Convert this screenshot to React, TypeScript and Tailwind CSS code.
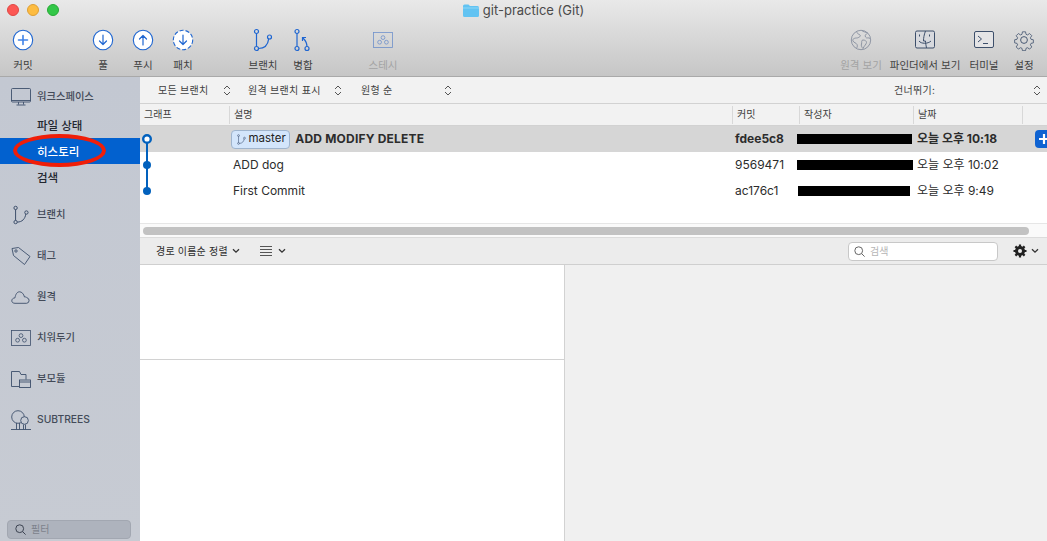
const font = { fontFamily: '"Inter", "Noto Sans CJK KR", sans-serif' }

const blue = "#1f66d1"
const slate = "#3d4f6b"

function ToolIcon({ children }: { children: React.ReactNode }) {
  return (
    <svg width="24" height="24" viewBox="0 0 24 24" fill="none" strokeLinecap="round" strokeLinejoin="round">
      {children}
    </svg>
  )
}

function CircleIcon({ dashed, children }: { dashed?: boolean; children: React.ReactNode }) {
  return (
    <ToolIcon>
      <circle cx="12" cy="12" r="9.7" fill="#fff" stroke={blue} strokeWidth="1.1" strokeDasharray={dashed ? "4 2" : undefined} strokeLinecap="butt" />
      {children}
    </ToolIcon>
  )
}

function BranchIcon({ color = blue, size = 24 }: { color?: string; size?: number }) {
  return (
    <svg width={size} height={size} viewBox="0 0 24 24" fill="none" stroke={color} strokeWidth="1.2">
      <circle cx="5.5" cy="3.5" r="2" />
      <circle cx="5.5" cy="20.5" r="2" />
      <circle cx="18.5" cy="9" r="2" />
      <path d="M5.5 5.5v13M7.5 20.5c6 0 9.5-4 10.2-9.6" />
    </svg>
  )
}

function StashIcon({ color, w, h }: { color: string; w: number; h: number }) {
  return (
    <svg width={w} height={h} viewBox="0 0 20 16" fill="none" stroke={color} strokeWidth="0.8">
      <rect x="0.5" y="0.5" width="19" height="15" />
      <circle cx="10" cy="5.6" r="1.9" />
      <circle cx="6.6" cy="10.2" r="1.9" />
      <circle cx="13.4" cy="10.2" r="1.9" />
    </svg>
  )
}

function ToolItem({ label, icon, width = "w-10", dim }: { label: string; icon: React.ReactNode; width?: string; dim?: boolean }) {
  return (
    <div className={`${width} flex flex-col items-center shrink-0`}>
      <div className={`h-6 flex items-center justify-center ${dim ? "opacity-60" : ""}`}>{icon}</div>
      <span className={`mt-[7px] text-[10.5px] leading-[14px] whitespace-nowrap ${dim ? "text-[#a3a3a3]" : "text-[#3f3f3f]"}`}>{label}</span>
    </div>
  )
}

function Updown({ className = "" }: { className?: string }) {
  return (
    <svg className={className} width="8" height="11" viewBox="0 0 8 11" fill="none" stroke="#555" strokeWidth="1">
      <path d="M1 4l3-3 3 3M1 7l3 3 3-3" />
    </svg>
  )
}

function Chevron() {
  return (
    <svg width="8" height="6" viewBox="0 0 8 6" fill="none" stroke="#333" strokeWidth="1.3">
      <path d="M1 1.2l3 3 3-3" />
    </svg>
  )
}

function SearchGlass({ color = "#666" }: { color?: string }) {
  return (
    <svg width="11" height="11" viewBox="0 0 11 11" fill="none" stroke={color} strokeWidth="1">
      <circle cx="4.7" cy="4.7" r="3.9" />
      <path d="M7.6 7.6l3 3" />
    </svg>
  )
}

function SideSection({ label, icon, className = "" }: { label: string; icon: React.ReactNode; className?: string }) {
  return (
    <div className={`flex items-center h-5 pl-[11px] ${className}`}>
      <div className="w-[26px] h-5 flex items-center justify-start shrink-0">{icon}</div>
      <span className="text-[10.3px] text-[#434a58] font-medium whitespace-nowrap">{label}</span>
    </div>
  )
}

const commits = [
  { hash: "fdee5c8", msg: "ADD MODIFY DELETE", date: "오늘 오후 10:18", bar: "ml-[-2px] w-[115px]", head: true },
  { hash: "9569471", msg: "ADD dog", date: "오늘 오후 10:02", bar: "ml-[-2px] w-[116px]" },
  { hash: "ac176c1", msg: "First Commit", date: "오늘 오후 9:49", bar: "ml-[-1px] w-[112px]" },
]

export default function App() {
  return (
    <div className="w-[1047px] h-[541px] overflow-hidden relative bg-white flex flex-col" style={font}>
      {/* title + toolbar */}
      <div className="h-[77px] shrink-0 bg-gradient-to-b from-[#e9e9e9] to-[#c6c6c6] border-b border-[#a9a9a9] flex flex-col">
        <div className="h-[21px] relative flex items-center justify-center">
          <div className="absolute left-[7px] top-[4px] flex gap-[8px]">
            <span className="w-3 h-3 rounded-full bg-[#fc5753] border border-[#df4744]" />
            <span className="w-3 h-3 rounded-full bg-[#fdbc40] border border-[#de9f34]" />
            <span className="w-3 h-3 rounded-full bg-[#33c748] border border-[#27aa35]" />
          </div>
          <div className="flex items-center gap-1">
            <svg width="16" height="13" viewBox="0 0 16 13">
              <path d="M0 2a1.5 1.5 0 0 1 1.5-1.5h4L7 2h7.5A1.5 1.5 0 0 1 16 3.500V11.500a1.500 1.500 0 0 1-1.500 1.500h-13A1.500 1.500 0 0 1 0 11.500z" fill="#62c3f2" />
              <path d="M0 4h16" stroke="#9adcf9" strokeWidth="0.8" />
            </svg>
            <span className="text-[13px] text-[#4a4a4a]">git-practice (Git)</span>
          </div>
        </div>
        <div className="flex pl-[3px] pt-[7px]">
          <ToolItem label="커밋" icon={<CircleIcon><path d="M12 7.500v9M7.500 12h9" stroke="#3f83e8" strokeWidth="1.6" /></CircleIcon>} />
          <div className="w-10 shrink-0" />
          <ToolItem label="풀" icon={<CircleIcon><path d="M12 7v9.500M8.500 13l3.500 3.500 3.500-3.500" stroke={blue} strokeWidth="1.2" /></CircleIcon>} />
          <ToolItem label="푸시" icon={<CircleIcon><path d="M12 17V7.500M8.500 11L12 7.500 15.500 11" stroke={blue} strokeWidth="1.2" /></CircleIcon>} />
          <ToolItem label="패치" icon={<CircleIcon dashed><path d="M12 7v9.500M8.500 13l3.500 3.500 3.500-3.500" stroke={blue} strokeWidth="1.2" /></CircleIcon>} />
          <div className="w-10 shrink-0" />
          <ToolItem label="브랜치" icon={<BranchIcon />} />
          <ToolItem
            label="병합"
            icon={
              <svg width="24" height="24" viewBox="0 0 24 24" fill="none" stroke={blue} strokeWidth="1.2">
                <circle cx="6" cy="3.500" r="2" />
                <circle cx="6" cy="20.500" r="2" />
                <circle cx="16" cy="20.500" r="2" />
                <path d="M6 5.500v13M16 18.500c0-3-1.500-6-4-8.500M11.500 13V9.500H15" />
              </svg>
            }
          />
          <div className="w-10 shrink-0" />
          <ToolItem label="스테시" dim icon={<StashIcon color="#2b63c4" w={20} h={16} />} />
          <div className="flex-1" />
          <ToolItem
            label="원격 보기"
            width="w-[48px]"
            dim
            icon={
              <svg width="22" height="22" viewBox="0 0 22 22" fill="none" stroke="#54617a" strokeWidth="0.9">
                <circle cx="11" cy="11" r="9.700" />
                <path d="M7 2.500c-.5 2 1.500 2.500 3 3.500s-1.500 3-3.500 3-4.500 1-3.500 3 3 1.500 4 3.500-.5 3 0 3.500M12 1.500c1 1.500 4 1.500 5.500 2.500-1.500 1.500-3 2-2 4s3.500 0 4.500 1.500M13 11c2 0 3.500 1 3.500 2.500S14 17 13 19.500c-1.500-1.500-2-3-1.500-4.500S11 11 13 11z" />
              </svg>
            }
          />
          <ToolItem
            label="파인더에서 보기"
            width="w-[70px] ml-[5px]"
            icon={
              <svg width="20" height="20" viewBox="0 0 20 20" fill="none" stroke={slate} strokeWidth="1">
                <rect x="0.500" y="1" width="19" height="17" rx="1.500" fill="#d7d9de" />
                <path d="M10.500 1C9 5 8.500 8 8.500 11H10.500c0 2 .5 4 1 7M4.500 4.500v2M14.500 4.500v2M4 11c2 3 9 3 12 0" />
              </svg>
            }
          />
          <ToolItem
            label="터미널"
            width="w-[40px] ml-[4px]"
            icon={
              <svg width="20" height="18" viewBox="0 0 20 18" fill="none" stroke={slate} strokeWidth="1">
                <rect x="0.500" y="0.500" width="19" height="16" rx="1.500" fill="#e4e4e6" />
                <path d="M4 5l3.500 3L4 11M9 12.500h5" />
              </svg>
            }
          />
          <ToolItem
            label="설정"
            width="w-[40px] mr-[3px]"
            icon={
              <svg width="22" height="22" viewBox="0 0 24 24" fill="none" stroke={slate} strokeWidth="1" strokeLinejoin="round">
                <circle cx="12" cy="12" r="3.700" />
                <path d="M10 1.500h4l.6 3.200 1.900.8 2.700-1.800 2.800 2.800-1.800 2.700.8 1.900 3 .6v4l-3 .6-.8 1.900 1.800 2.700-2.800 2.800-2.700-1.800-1.900.8-.6 3h-4l-.6-3-1.900-.8-2.700 1.800-2.800-2.800 1.800-2.700-.8-1.900-3-.6v-4l3-.6.8-1.900-1.800-2.700 2.800-2.800 2.700 1.800 1.900-.8z" transform="translate(1.800 1.800) scale(.85)" />
              </svg>
            }
          />
        </div>
      </div>

      <div className="flex-1 flex min-h-0">
        {/* sidebar */}
        <aside className="w-[140px] shrink-0 bg-gradient-to-b from-[#c3c8d2] to-[#c7cbd3] flex flex-col pt-[10px] pb-[2px] relative">
          <SideSection
            label="워크스페이스"
            icon={
              <svg width="20" height="18" viewBox="0 0 20 18" fill="none" stroke={slate} strokeWidth="0.9">
                <rect x="0.500" y="0.500" width="19" height="13.500" rx="1" />
                <path d="M0.500 12.500h19M7.500 14v2.500M12.500 14v2.500M5.500 17h9" />
              </svg>
            }
          />
          <div className="mt-[5px] flex flex-col text-[11.5px] font-medium text-[#23272f]">
            <div className="h-[26px] flex items-center pl-[37px] pt-[3px]">파일 상태</div>
            <div className="h-[26px] flex items-center pl-[37px] pt-[3px] bg-[#0261cf] text-white">히스토리</div>
            <div className="h-[26px] flex items-center pl-[37px] pt-[3px]">검색</div>
          </div>
          <SideSection className="mt-[15px]" label="브랜치" icon={<BranchIcon color={slate} size={20} />} />
          <SideSection
            className="mt-[21px]"
            label="태그"
            icon={
              <svg width="20" height="20" viewBox="0 0 20 20" fill="none" stroke={slate} strokeWidth="0.9" strokeLinejoin="round">
                <path d="M1 2.500L7.500 1.500 19 10.500 13.500 18.500 2.500 9.500z" />
                <circle cx="5" cy="5" r="1.200" />
              </svg>
            }
          />
          <SideSection
            className="mt-[21px]"
            label="원격"
            icon={
              <svg width="19" height="13" viewBox="0 0 19 13" fill="none" stroke={slate} strokeWidth="0.9">
                <path d="M4 12.300H15.500a2.800 2.800 0 0 0 .5-5.500C15.500 6 14.500 5.800 13.500 6 12.800 3 10.800.8 8.500.8 6 .8 4.500 3.500 4 6.800 2 7 .8 8.200.8 9.800c0 1.500 1.200 2.500 3.200 2.500z" />
              </svg>
            }
          />
          <SideSection className="mt-[21px]" label="치워두기" icon={<StashIcon color={slate} w={20} h={16} />} />
          <SideSection
            className="mt-[21px]"
            label="부모듈"
            icon={
              <svg width="20" height="17" viewBox="0 0 20 17" fill="none" stroke={slate} strokeWidth="0.9">
                <path d="M8 15.500H.500V.500h8l1.500 3h5v5" />
                <rect x="8.500" y="9" width="11" height="7.500" />
                <path d="M8.500 11h11" />
              </svg>
            }
          />
          <SideSection
            className="mt-[21px]"
            label="SUBTREES"
            icon={
              <svg width="20" height="20" viewBox="0 0 20 20" fill="none" stroke={slate} strokeWidth="0.9">
                <circle cx="7" cy="7" r="6.300" fill="#c5cad3" />
                <circle cx="13.500" cy="10.500" r="3.800" fill="#c5cad3" />
                <path d="M0 19.500h20M5.500 13v6.500M8.500 13v6.500M12.500 14.500v5M14.500 14.500v5" />
              </svg>
            }
          />
          <div className="mt-auto ml-[7px] mr-[9px] h-[19px] rounded-[4px] bg-[#aeb3bd] border border-[#a2a7b1] flex items-center pl-[7px] gap-[5px]">
            <SearchGlass color="#3d4452" />
            <span className="text-[10px] text-[#7d828c]">필터</span>
          </div>
          {/* red marker drawn over the screenshot */}
          <div className="absolute left-[13px] top-[57px] w-[93px] h-[33px] rounded-[50%] border-[4.5px] border-[#f01e08]" />
        </aside>

        {/* main */}
        <main className="flex-1 min-w-0 flex flex-col">
          <div className="h-[27px] shrink-0 bg-[#f2f2f2] border-b border-[#d2d2d2] flex items-center text-[10px] text-[#3f3f3f]">
            <span className="ml-[18px] w-[65px] tracking-[0.3px]">모든 브랜치</span>
            <Updown />
            <span className="ml-[17px] w-[86px] tracking-[0.3px]">원격 브랜치 표시</span>
            <Updown />
            <span className="ml-[19px] w-[83px] tracking-[0.3px]">원형 순</span>
            <Updown />
            <span className="ml-[442px] w-[139px] tracking-[0.3px]">건너뛰기:</span>
            <Updown />
          </div>
          <div className="h-[22px] shrink-0 bg-[#f2f2f2] border-b border-[#d2d2d2] flex items-center text-[10px] text-[#3f3f3f]">
            <div className="w-[90px] h-[18px] pl-[4px] flex items-center border-r border-[#d8d8d8]">그래프</div>
            <div className="w-[503px] h-[18px] pl-[4px] flex items-center border-r border-[#d8d8d8]">설명</div>
            <div className="w-[67px] h-[18px] pl-[4px] flex items-center border-r border-[#d8d8d8]">커밋</div>
            <div className="w-[114px] h-[18px] pl-[4px] flex items-center border-r border-[#d8d8d8]">작성자</div>
            <div className="w-[109px] h-[18px] pl-[4px] flex items-center border-r border-[#d8d8d8]">날짜</div>
          </div>
          <div className="h-[98px] shrink-0 bg-white border-b border-[#e6e6e6]">
            {commits.map((c, i) => (
              <div key={c.hash} className={`h-[26px] flex items-center text-[12px] text-[#2c2c2c] ${c.head ? "bg-[#d6d6d6] font-bold" : ""}`}>
                <div className="w-[90px] h-full shrink-0 relative">
                  <svg className="absolute left-0 top-0" width="20" height="26" viewBox="0 0 20 26">
                    {i > 0 && <path d={i === 1 ? "M7 0V26" : "M7 0V13"} stroke="#0261bd" strokeWidth="2" />}
                    {i === 0 && <path d="M7 13V26" stroke="#0261bd" strokeWidth="2" />}
                    {c.head ? (
                      <circle cx="7" cy="13" r="3.800" fill="#fff" stroke="#0261bd" strokeWidth="2.400" />
                    ) : (
                      <circle cx="7" cy="13" r="4" fill="#0261bd" />
                    )}
                  </svg>
                </div>
                <div className={`w-[501px] shrink-0 flex items-center gap-[5px] ${c.head ? "pl-[1px]" : "pl-[3px]"}`}>
                  {c.head && (
                    <span className="h-[19px] px-[3.5px] rounded-[4px] bg-[#d3e5fb] border border-[#9fb4cd] flex items-center gap-[2px] font-normal text-[11.5px] text-[#222]">
                      <BranchIcon color="#33476b" size={11} />
                      master
                    </span>
                  )}
                  <span className={c.head ? "tracking-[0.2px]" : ""}>{c.msg}</span>
                </div>
                <div className="w-[67px] shrink-0 pl-[4px]">{c.hash}</div>
                <div className="w-[114px] shrink-0 pl-[1px]">
                  <div className={`h-[10px] bg-black ${c.bar}`} />
                </div>
                <div className="pl-[4px] ml-[1px] whitespace-nowrap">{c.date}</div>
                {c.head && (
                  <div className="ml-auto w-[12px] h-[18px] rounded-l-[4px] bg-[#0f63d2] flex items-center pl-[4px] overflow-hidden shrink-0">
                    <svg width="10" height="10" viewBox="0 0 10 10" className="shrink-0" stroke="#fff" strokeWidth="2.2">
                      <path d="M5 0v10M0 5h10" />
                    </svg>
                  </div>
                )}
              </div>
            ))}
          </div>
          <div className="h-[14px] shrink-0 bg-[#fafafa] border-b border-[#dcdcdc] flex items-center pl-[3px]">
            <div className="w-[886px] h-[8px] rounded-full bg-[#c2c2c2]" />
          </div>
          <div className="h-[27px] shrink-0 bg-[#ececec] border-b border-[#cfcfcf] flex items-center text-[10px] text-[#2c2c2c]">
            <span className="ml-[16px] tracking-[0.2px]">경로 이름순 정렬</span>
            <span className="ml-[4px]"><Chevron /></span>
            <svg className="ml-[20px]" width="12" height="11" viewBox="0 0 12 11" stroke="#444" strokeWidth="0.9">
              <path d="M0 .5h12M0 3.500h12M0 6.500h12M0 9.500h12" />
            </svg>
            <span className="ml-[6px]"><Chevron /></span>
            <div className="ml-auto w-[150px] h-[19px] bg-white rounded-[4px] border border-[#c8c8c8] flex items-center pl-[5px] gap-[5px]">
              <SearchGlass />
              <span className="text-[#b5b5b5]">검색</span>
            </div>
            <svg className="ml-[15px]" width="14" height="14" viewBox="0 0 14 14">
              <circle cx="7" cy="7" r="3.500" fill="none" stroke="#222" strokeWidth="3" />
              <path d="M7 .500v13M.500 7h13M2.400 2.400l9.200 9.200M11.600 2.400l-9.200 9.200" stroke="#222" strokeWidth="2.200" />
              <circle cx="7" cy="7" r="2" fill="#ececec" />
            </svg>
            <span className="ml-[4px] mr-[8px]"><Chevron /></span>
          </div>
          <div className="flex-1 flex min-h-0">
            <div className="w-[425px] shrink-0 border-r border-[#d2d2d2] flex flex-col">
              <div className="h-[95px] border-b border-[#d2d2d2] bg-white" />
              <div className="flex-1 bg-white" />
            </div>
            <div className="flex-1 bg-[#f0f0f0]" />
          </div>
        </main>
      </div>
    </div>
  )
}
